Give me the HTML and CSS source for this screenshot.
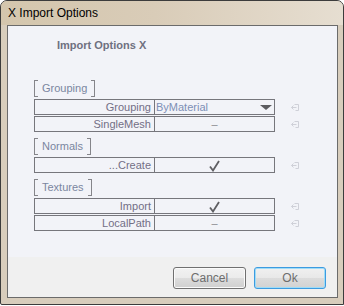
FILE: index.html
```html
<!DOCTYPE html>
<html lang="en">
<head>
    <meta charset="UTF-8">
    <title>X Import Options</title>
    <link rel="stylesheet" href="styles.css">
</head>
<body>
    <div class="window">
        <div class="titlebar">X Import Options</div>
        <div class="client">
            <div class="content">
                <div class="heading">Import Options X</div>

                <div class="group">
                    <div class="group-label">Grouping</div>
                    <div class="line">
                        <div class="row">
                            <div class="name">Grouping</div>
                            <div class="value select">ByMaterial<span class="arrow"></span></div>
                        </div>
                        <svg class="reset" width="10" height="9" viewBox="0 0 10 9"><path d="M4.5 1.5H8.5V7.5H5.5M6.5 4.5H1.5M3.5 2.5L1.5 4.5L3.5 6.5" fill="none" stroke="#cfd0d8" stroke-width="1"/></svg>
                    </div>
                    <div class="line">
                        <div class="row">
                            <div class="name">SingleMesh</div>
                            <div class="value dash">–</div>
                        </div>
                        <svg class="reset" width="10" height="9" viewBox="0 0 10 9"><path d="M4.5 1.5H8.5V7.5H5.5M6.5 4.5H1.5M3.5 2.5L1.5 4.5L3.5 6.5" fill="none" stroke="#cfd0d8" stroke-width="1"/></svg>
                    </div>
                </div>

                <div class="group">
                    <div class="group-label">Normals</div>
                    <div class="line">
                        <div class="row">
                            <div class="name">...Create</div>
                            <div class="value"><svg class="check" width="11" height="12" viewBox="0 0 11 12"><path d="M1 6.5L4 10.5L10 1" fill="none" stroke="#5f5f63" stroke-width="1.8"/></svg></div>
                        </div>
                        <svg class="reset" width="10" height="9" viewBox="0 0 10 9"><path d="M4.5 1.5H8.5V7.5H5.5M6.5 4.5H1.5M3.5 2.5L1.5 4.5L3.5 6.5" fill="none" stroke="#cfd0d8" stroke-width="1"/></svg>
                    </div>
                </div>

                <div class="group">
                    <div class="group-label">Textures</div>
                    <div class="line">
                        <div class="row">
                            <div class="name">Import</div>
                            <div class="value"><svg class="check" width="11" height="12" viewBox="0 0 11 12"><path d="M1 6.5L4 10.5L10 1" fill="none" stroke="#5f5f63" stroke-width="1.8"/></svg></div>
                        </div>
                        <svg class="reset" width="10" height="9" viewBox="0 0 10 9"><path d="M4.5 1.5H8.5V7.5H5.5M6.5 4.5H1.5M3.5 2.5L1.5 4.5L3.5 6.5" fill="none" stroke="#cfd0d8" stroke-width="1"/></svg>
                    </div>
                    <div class="line">
                        <div class="row">
                            <div class="name">LocalPath</div>
                            <div class="value dash">–</div>
                        </div>
                        <svg class="reset" width="10" height="9" viewBox="0 0 10 9"><path d="M4.5 1.5H8.5V7.5H5.5M6.5 4.5H1.5M3.5 2.5L1.5 4.5L3.5 6.5" fill="none" stroke="#cfd0d8" stroke-width="1"/></svg>
                    </div>
                </div>
            </div>
            <div class="footer">
                <button class="btn">Cancel</button>
                <button class="btn default">Ok</button>
            </div>
        </div>
    </div>
</body>
</html>
```

FILE: styles.css
```css
* {
    margin: 0;
    padding: 0;
    box-sizing: border-box;
}

body {
    font-family: 'Liberation Sans', Arial, sans-serif;
    background: #ffffff;
}

.window {
    width: 344px;
    height: 305px;
    border: 1px solid #3c3c3c;
    border-radius: 7px 7px 0 2px;
    background: #d8cdbc;
    display: flex;
    flex-direction: column;
    overflow: hidden;
}

.titlebar {
    height: 24px;
    padding: 5px 0 0 7px;
    font-size: 12px;
    line-height: 15px;
    color: #000000;
    background: linear-gradient(90deg, #d4c6ad 0%, #d9ccb8 45%, #e6ded1 100%);
}

.client {
    flex: 1;
    margin: 0 5px 6px 6px;
    border: 1px solid #6b6b6b;
    display: flex;
    flex-direction: column;
}

.content {
    flex: 1;
    background: #f2f3f8;
    padding: 13px 0 0 26px;
}

.heading {
    margin-left: 23px;
    font-size: 11px;
    font-weight: bold;
    line-height: 13px;
    color: #6f7080;
    margin-bottom: 28px;
}

.group {
    display: flex;
    flex-direction: column;
    gap: 1px;
    margin-bottom: 6px;
}

.group-label {
    display: flex;
    align-items: center;
    align-self: flex-start;
    height: 16px;
    margin-bottom: 2px;
    font-size: 11px;
    color: #7a86a0;
    gap: 4px;
}

.group-label::before,
.group-label::after {
    content: '';
    width: 3px;
    height: 15px;
    margin-top: 1px;
    border: 1px solid #85858a;
}

.group-label::before {
    border-right: none;
}

.group-label::after {
    border-left: none;
}

.line {
    display: flex;
    align-items: center;
    gap: 15px;
}

.row {
    width: 241px;
    height: 16px;
    border: 1px solid #76767c;
    display: grid;
    grid-template-columns: 120px 1fr;
    font-size: 11px;
    line-height: 14px;
}

.name {
    border-right: 1px solid #76767c;
    text-align: right;
    padding-right: 3px;
    color: #736f86;
}

.value {
    display: flex;
    align-items: center;
    justify-content: center;
    color: #8a8a90;
}

.value.select {
    justify-content: space-between;
    padding: 0 2px 0 1px;
    color: #7d8fb6;
}

.arrow {
    width: 0;
    height: 0;
    border-left: 6px solid transparent;
    border-right: 6px solid transparent;
    border-top: 5px solid #5c5c60;
    margin-top: 1px;
}

.check {
    margin-top: 1px;
}

.footer {
    height: 40px;
    background: #f0f0f0;
    display: flex;
    justify-content: flex-end;
    gap: 8px;
    padding: 10px 11px 0 0;
}

.btn {
    height: 22px;
    width: 73px;
    border: 1px solid #707070;
    border-radius: 3px;
    background: linear-gradient(#f2f2f2 0%, #ebebeb 50%, #dddddd 51%, #cfcfcf 100%);
    box-shadow: inset 0 0 0 1px #fbfbfb;
    font-family: 'Liberation Sans', Arial, sans-serif;
    font-size: 12px;
    color: #6d6d6d;
}

.btn.default {
    width: 72px;
    border-color: #3c9be0;
    box-shadow: inset 0 0 0 1px #9fdcf7;
    background: linear-gradient(#f0f0f0 0%, #e8e8e8 50%, #dcdcdc 51%, #d2d2d2 100%);
}
```
